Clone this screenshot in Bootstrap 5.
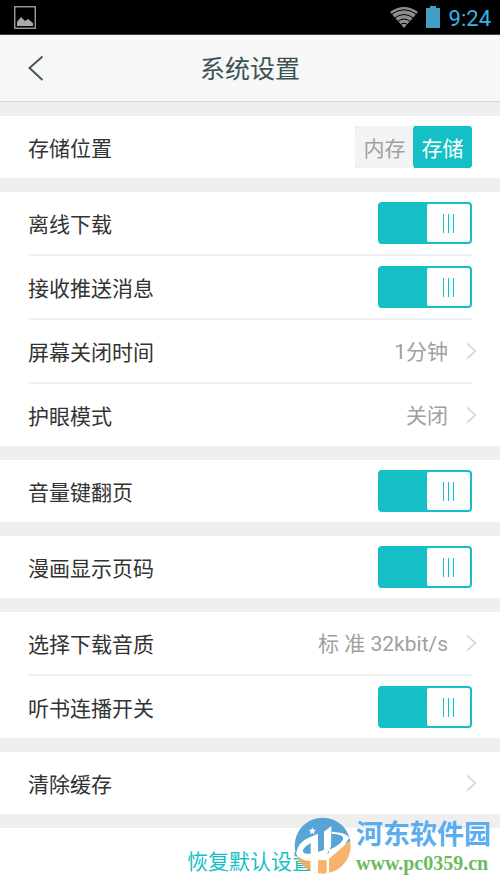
<!DOCTYPE html>
<html lang="zh-CN">
<head>
<meta charset="utf-8">
<meta name="viewport" content="width=device-width, initial-scale=1">
<title>系统设置</title>
<link href="https://cdn.jsdelivr.net/npm/bootstrap@5.3.0/dist/css/bootstrap.min.css" rel="stylesheet">
<style>
:root { --teal: #14bfc5; }
body { font-family: Roboto, "Noto Sans CJK SC", sans-serif; font-size: 21px; line-height: 30px; color: #333; background: #efefef; }
.screen { min-height: 100vh; }
.statusbar { height: 35px; padding: 0 9px 0 14px; background: #000; border-bottom: 1px solid #444; }
.clock { font-size: 22px; color: #33b5e5; margin-left: 9px; padding-top: 4px; }
.titlebar { height: 67px; padding: 0 28px; background: #f7f7f7; border-bottom: 1px solid #d8d8d8; margin-bottom: 14px; }
.titlebar h1 { font-size: 25px; line-height: 36px; font-weight: 400; color: #3b5153; padding-top: 4px; }
.side { width: 40px; height: 40px; }
.groups { gap: 14px; }
.panel { background: #fff; padding: 0 28px; }
.setting { min-height: 62px; color: #333; }
.setting:not(:last-child) { border-bottom: 2px solid #f1f1f1; min-height: 64px; }
.setting > span, .setting > label { padding-top: 4px; }
.setting > .value { color: #a0a0a0; padding-top: 2px; }
.chevron { overflow: visible; }
.toggle { appearance: none; position: relative; width: 94px; height: 42px; margin: 0; border-radius: 4px; background: #c8c8c8; }
.toggle:checked { background: var(--teal); }
.toggle::before { content: ""; position: absolute; top: 2px; bottom: 2px; left: 2px; width: 43px; border-radius: 2px; background: linear-gradient(#fff, #fcfcfc); }
.toggle:checked::before { left: auto; right: 2px; }
.toggle::after { content: ""; position: absolute; top: 12px; right: 18px; width: 11px; height: 19px; background: linear-gradient(var(--teal), var(--teal)) center / 1px 100% no-repeat; border: solid var(--teal); border-width: 0 1px; }
.storage { background: var(--teal); border-radius: 4px; }
.storage .btn { width: 59px; height: 42px; padding: 0; font-size: 21px; line-height: 46px; border: 0; background: #f3f3f3; color: #a0a0a0; }
.storage.btn-group > .btn { border-radius: 4px; margin: 0; }
.storage .btn-check:checked + .btn { background: var(--teal); color: #fff; }
.reset { min-height: 60px; background: #fff; }
.reset .btn { font-size: 21px; line-height: 30px; color: var(--teal); border: 0; padding: 8px 0 0; }
.brandmark { position: absolute; right: 9px; bottom: 13px; gap: 4px; pointer-events: none; }
.brand-name { font-size: 27px; line-height: 32px; font-weight: 700; color: #5aaef0; padding-top: 2px; }
.brand-url { font-family: "Liberation Serif", serif; font-size: 20px; line-height: 24px; font-weight: 700; color: #6cba60; }
</style>
</head>
<body>
<div class="screen position-relative d-flex flex-column">
  <div class="statusbar d-flex align-items-center">
    <svg width="22" height="23" viewBox="0 0 22 23" aria-hidden="true"><rect x=".75" y=".75" width="20.5" height="21.5" fill="none" stroke="#aaa" stroke-width="1.3"/><path d="M3 20v-4l4-5 4 4 3-2 5 4v3z" fill="#aaa"/></svg>
    <svg class="ms-auto" width="28" height="21" viewBox="0 0 28 21" aria-hidden="true"><path d="M0 5Q14-5 28 5L14 21z" fill="#8d8d8d"/><path d="M1 7.5Q14-2 27 7.5M4 11.5Q14 3.500 24 11.500M7 15Q14 9 21 15M10 18Q14 14.500 18 18" fill="none" stroke="#000" stroke-width="1"/></svg>
    <svg class="ms-2" width="14" height="22" viewBox="0 0 14 22" aria-hidden="true"><path d="M0 2h4V0h6v2h4v20H0z" fill="#419fc6"/></svg>
    <span class="clock">9:24</span>
  </div>
  <header class="titlebar d-flex align-items-center justify-content-between">
    <a href="#" class="side d-flex align-items-center" aria-label="返回"><svg width="16" height="26" viewBox="0 0 16 26"><path d="M14.500 1.500L1.500 13l13 12" fill="none" stroke="#43595b" stroke-width="2"/></svg></a>
    <h1 class="mb-0">系统设置</h1>
    <span class="side"></span>
  </header>
  <main class="groups d-flex flex-column flex-grow-1">
    <section class="panel">
      <div class="setting d-flex align-items-center justify-content-between">
        <span id="storage-label">存储位置</span>
        <div class="storage btn-group" role="group" aria-labelledby="storage-label">
          <input type="radio" class="btn-check" name="storage" id="internal"><label class="btn" for="internal">内存</label>
          <input type="radio" class="btn-check" name="storage" id="external" checked><label class="btn" for="external">存储</label>
        </div>
      </div>
    </section>
    <section class="panel">
      <div class="setting d-flex align-items-center justify-content-between"><label for="offline">离线下载</label><input class="toggle" type="checkbox" role="switch" id="offline" checked></div>
      <div class="setting d-flex align-items-center justify-content-between"><label for="push">接收推送消息</label><input class="toggle" type="checkbox" role="switch" id="push" checked></div>
      <a href="#" class="setting d-flex align-items-center text-decoration-none"><span class="me-auto">屏幕关闭时间</span><span class="value">1分钟</span><svg class="chevron" width="24" height="16" viewBox="0 0 24 16" aria-hidden="true"><path d="M19 .5L27.500 8 19 15.500" fill="none" stroke="#ccc" stroke-width="1.3"/></svg></a>
      <a href="#" class="setting d-flex align-items-center text-decoration-none"><span class="me-auto">护眼模式</span><span class="value">关闭</span><svg class="chevron" width="24" height="16" viewBox="0 0 24 16" aria-hidden="true"><path d="M19 .5L27.500 8 19 15.500" fill="none" stroke="#ccc" stroke-width="1.3"/></svg></a>
    </section>
    <section class="panel">
      <div class="setting d-flex align-items-center justify-content-between"><label for="volume">音量键翻页</label><input class="toggle" type="checkbox" role="switch" id="volume" checked></div>
    </section>
    <section class="panel">
      <div class="setting d-flex align-items-center justify-content-between"><label for="pages">漫画显示页码</label><input class="toggle" type="checkbox" role="switch" id="pages" checked></div>
    </section>
    <section class="panel">
      <a href="#" class="setting d-flex align-items-center text-decoration-none"><span class="me-auto">选择下载音质</span><span class="value">标 准 32kbit/s</span><svg class="chevron" width="24" height="16" viewBox="0 0 24 16" aria-hidden="true"><path d="M19 .5L27.500 8 19 15.500" fill="none" stroke="#ccc" stroke-width="1.3"/></svg></a>
      <div class="setting d-flex align-items-center justify-content-between"><label for="autoplay">听书连播开关</label><input class="toggle" type="checkbox" role="switch" id="autoplay" checked></div>
    </section>
    <section class="panel">
      <a href="#" class="setting d-flex align-items-center text-decoration-none"><span class="me-auto">清除缓存</span><svg class="chevron" width="24" height="16" viewBox="0 0 24 16" aria-hidden="true"><path d="M19 .5L27.500 8 19 15.500" fill="none" stroke="#ccc" stroke-width="1.3"/></svg></a>
    </section>
    <section class="reset flex-grow-1 d-flex align-items-center justify-content-center"><button type="button" class="btn">恢复默认设置</button></section>
  </main>
  <div class="brandmark d-flex align-items-center">
    <svg width="58" height="58" viewBox="0 0 174 174" aria-hidden="true">
      <defs><clipPath id="disc"><circle cx="86" cy="86" r="84"/></clipPath></defs>
      <g clip-path="url(#disc)">
        <path d="M0 0H174V70L100 110H10L6 122Q0 110 0 86z" fill="#57a5d5"/>
        <path d="M6 116Q12 104 34 100L50 128 100 130L174 66V174H0z" fill="#f5ab5c" fill-opacity=".9"/>
        <path d="M6 110Q12 74 44 62L72 50V104L90 98V44L112 27V86L90 128 50 132Q18 130 6 110z" fill="#fff"/>
        <path d="M8 104Q18 86 48 76V80Q24 94 26 106Q30 116 50 114V174H72V128L98 122V174H105V118Q150 92 166 62Q158 46 113 44V50Q146 52 148 64Q144 84 105 98V118L72 128Q20 132 8 104z" fill="#fff"/>
        <path d="M50 78Q24 94 27 104Q30 112 50 110z" fill="#57a5d5"/>
        <path d="M72 50L90 40V98L72 104zM112 52Q146 52 147 64Q144 80 112 92z" fill="#57a5d5"/>
      </g>
      <path d="M55 31l3 7 8 1-6 5 2 8-7-4-7 4 2-8-6-5 8-1z" fill="#fff"/>
    </svg>
    <div class="d-flex flex-column"><span class="brand-name">河东软件园</span><span class="brand-url">www.pc0359.cn</span></div>
  </div>
</div>
<script src="https://cdn.jsdelivr.net/npm/bootstrap@5.3.0/dist/js/bootstrap.bundle.min.js"></script>
</body>
</html>
